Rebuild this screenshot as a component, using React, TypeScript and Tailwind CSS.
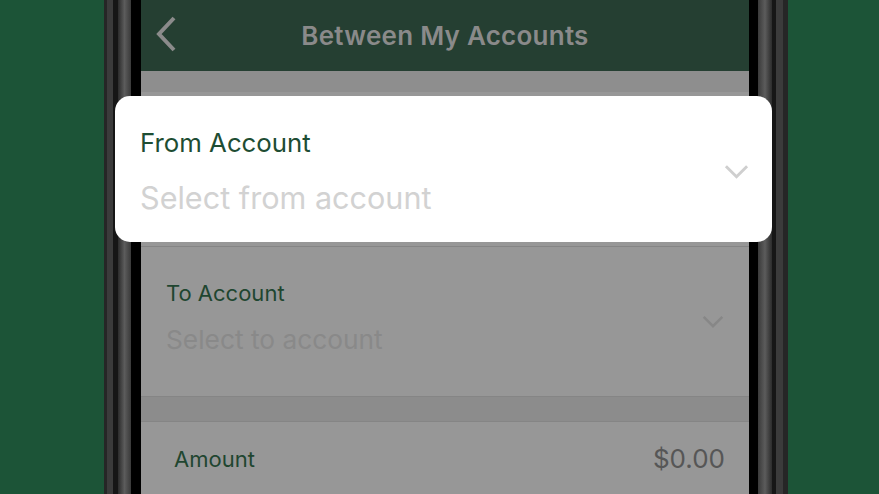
const Chevron = ({ className }: { className: string }) => (
  <svg viewBox="0 0 26 16" className={className} fill="none" stroke="currentColor" strokeWidth={3}>
    <path d="M2 2 L13 13 L24 2" />
  </svg>
);

const App = () => {
  return (
    <div className="relative h-[494px] w-[879px] overflow-hidden bg-[#1c5437] font-['Inter',sans-serif]">
      <div className="ml-[104px] flex h-full w-[684px]">
        {/* left bezel */}
        <div className="flex h-full">
          <div className="w-[3px] bg-[#262626]" />
          <div className="w-[6px] bg-[#3b3b3b]" />
          <div className="w-[5px] bg-[#161616]" />
          <div className="w-[13px] bg-gradient-to-r from-[#2c2c2c] via-[#5c5c5c] to-[#3a3a3a]" />
          <div className="w-[10px] bg-black" />
        </div>

        {/* screen */}
        <div className="flex w-[608px] flex-col bg-[#979797]">
          <header className="relative flex h-[71px] items-center justify-center bg-[#253f32]">
            <svg viewBox="0 0 22 36" className="absolute left-[14px] top-[16px] h-[36px] w-[22px] text-[#8b8b8b]" fill="none" stroke="currentColor" strokeWidth={4}>
              <path d="M19 2 L4 18 L19 34" />
            </svg>
            <h1 className="text-[26px] font-semibold tracking-[0.25px] text-[#8a8a8a]">Between My Accounts</h1>
          </header>

          <div className="h-[21px] bg-[#8e8e8e]" />
          <div className="h-[155px] border-b border-[#858585]" />

          <div className="flex h-[150px] items-start justify-between border-b border-[#858585] pl-[25px] pr-[25px] pt-[32px]">
            <div className="flex flex-col">
              <span className="text-[22px] leading-[28px] text-[#1f4630]">To Account</span>
              <span className="mt-[17px] text-[26.3px] leading-[32px] text-[#898989]">Select to account</span>
            </div>
            <Chevron className="mt-[36px] h-[14px] w-[22px] text-[#878787]" />
          </div>

          <div className="h-[25px] border-b border-[#858585] bg-[#8c8c8c]" />

          <div className="flex items-center justify-between pl-[33px] pr-[24px] pt-[20px]">
            <span className="text-[22px] leading-[30px] text-[#1f4630]">Amount</span>
            <span className="text-[26px] leading-[34px] text-[#565656]">$0.00</span>
          </div>
        </div>

        {/* right bezel */}
        <div className="flex h-full">
          <div className="w-[9px] bg-black" />
          <div className="w-[14px] bg-gradient-to-r from-[#3a3a3a] via-[#5c5c5c] to-[#2c2c2c]" />
          <div className="w-[4px] bg-[#161616]" />
          <div className="w-[7px] bg-[#3b3b3b]" />
          <div className="w-[5px] bg-[#262626]" />
        </div>
      </div>

      {/* selection card over dimmed screen */}
      <div className="absolute left-[115px] top-[96px] flex h-[146px] w-[657px] items-start justify-between rounded-[15px] bg-white pl-[25px] pr-[23px] pt-[31px]">
        <div className="flex flex-col">
          <span className="text-[25.8px] leading-[32px] text-[#1e4d33]">From Account</span>
          <span className="mt-[21px] text-[30.6px] leading-[36px] text-[#d2d2d2]">Select from account</span>
        </div>
        <Chevron className="mt-[37px] h-[16px] w-[25px] text-[#cfcfcf]" />
      </div>
    </div>
  );
};

export default App;
